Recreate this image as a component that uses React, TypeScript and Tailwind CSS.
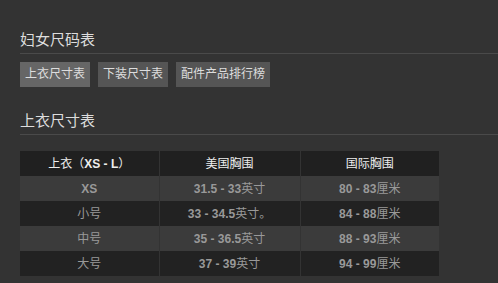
const rows = [
  { size: 'XS', us: '31.5 - 33', usUnit: '英寸', intl: '80 - 83', latin: true },
  { size: '小号', us: '33 - 34.5', usUnit: '英寸。', intl: '84 - 88', latin: false },
  { size: '中号', us: '35 - 36.5', usUnit: '英寸', intl: '88 - 93', latin: false },
  { size: '大号', us: '37 - 39', usUnit: '英寸', intl: '94 - 99', latin: false },
]

const tabs = ['上衣尺寸表', '下装尺寸表', '配件产品排行榜']

const font = { fontFamily: '"Liberation Sans", "Noto Sans CJK SC", sans-serif' }

export default function App() {
  return (
    <div className="w-full h-[283px] bg-[#333333] pl-5 pt-[30px] overflow-hidden" style={font}>
      <h2 className="text-[15px] leading-[20px] pb-[3px] text-[#dddddd] border-b border-[#4a4a4a] font-normal">
        妇女尺码表
      </h2>

      <div className="flex gap-2 mt-2">
        {tabs.map((t, i) => (
          <button
            key={t}
            className={`h-[25px] px-[5px] text-[12px] leading-[25px] text-[#dddddd] ${
              i === 0 ? 'bg-[#666666]' : 'bg-[#555555]'
            }`}
          >
            {t}
          </button>
        ))}
      </div>

      <h2 className="mt-6 text-[15px] leading-[20px] pb-[3px] text-[#dddddd] border-b border-[#4a4a4a] font-normal">
        上衣尺寸表
      </h2>

      <table className="mt-4 w-[419px] table-fixed border-collapse text-[12px]">
        <colgroup>
          <col className="w-[139px]" />
          <col className="w-[141px]" />
          <col className="w-[139px]" />
        </colgroup>
        <thead>
          <tr className="h-[25px] bg-[#202020] text-[#eeeeee]">
            <th className="font-normal text-center p-0">
              上衣（<span className="font-bold">XS - L</span>）
            </th>
            <th className="font-normal text-center p-0 border-l border-[#333333]">美国胸围</th>
            <th className="font-normal text-center p-0 border-l border-[#333333]">国际胸围</th>
          </tr>
        </thead>
        <tbody>
          {rows.map((r, i) => (
            <tr
              key={r.size}
              className={`h-[25px] text-[#999999] ${i % 2 === 0 ? 'bg-[#3b3b3b]' : 'bg-[#222222]'}`}
            >
              <td className={`text-center p-0 ${r.latin ? 'font-bold' : ''}`}>{r.size}</td>
              <td className="text-center p-0 border-l border-[#333333]">
                <span className="font-bold">{r.us}</span>
                {r.usUnit}
              </td>
              <td className="text-center p-0 border-l border-[#333333]">
                <span className="font-bold">{r.intl}</span>厘米
              </td>
            </tr>
          ))}
        </tbody>
      </table>
    </div>
  )
}
